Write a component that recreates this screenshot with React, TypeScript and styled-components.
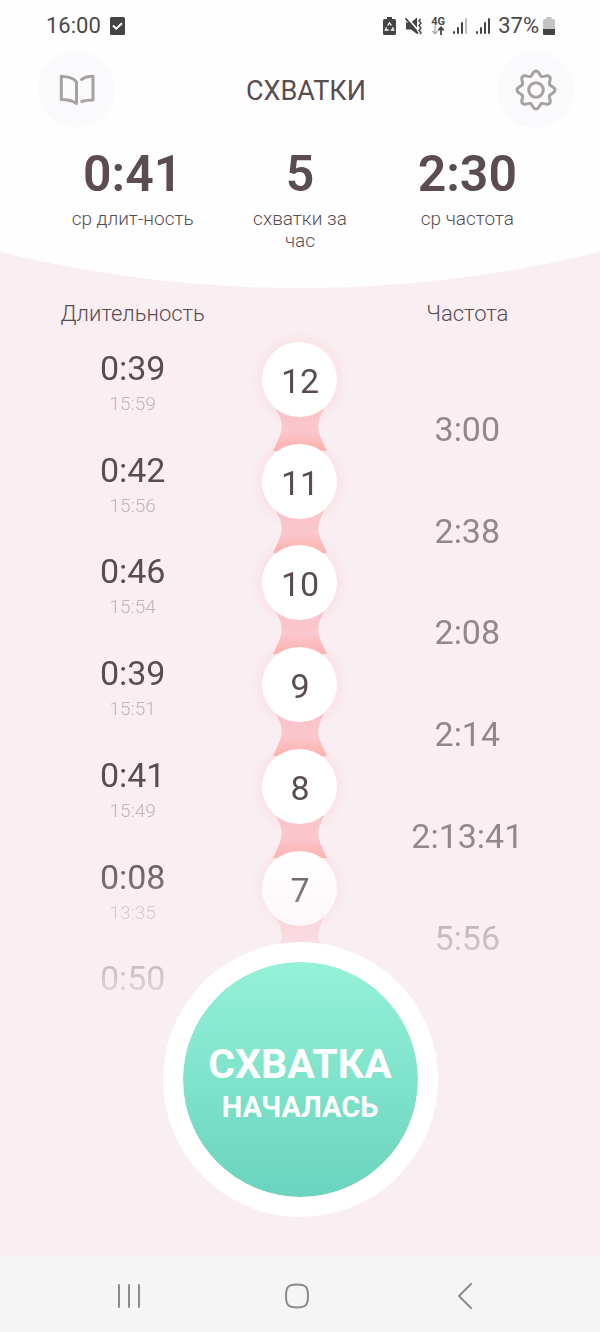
import React from "react";
import styled, { createGlobalStyle } from "styled-components";

const GlobalStyle = createGlobalStyle`
  * { box-sizing: border-box; }
  body {
    margin: 0;
    background: #f9eef2;
    color: #5a4c51;
    font-family: Roboto, "Liberation Sans", sans-serif;
  }
  button { font: inherit; color: inherit; border: 0; padding: 0; background: none; cursor: pointer; }
  h1, h2, p, dl, dd, dt, ol { margin: 0; padding: 0; }
  svg { display: block; }
`;

const Screen = styled.div`
  min-height: 100vh;
  display: flex;
  flex-direction: column;
`;

const Header = styled.header`
  background: #fefefe;
`;

const StatusBar = styled.div`
  height: 51px;
  padding: 0 45px 0 46px;
  display: flex;
  align-items: center;
  justify-content: space-between;
  font-size: 22px;
  line-height: 26px;
  color: #4a4a4a;
`;

const StatusGroup = styled.div<{ $gap: number }>`
  display: flex;
  align-items: center;
  gap: ${(p) => p.$gap}px;
`;

const TopBar = styled.div`
  padding: 0 26px 0 38px;
  display: flex;
  align-items: center;
  justify-content: space-between;
`;

const RoundButton = styled.button`
  width: 77px;
  height: 77px;
  border-radius: 50%;
  background: #fafafd;
  display: grid;
  place-items: center;
`;

const Title = styled.h1`
  padding-top: 2px;
  font-size: 27px;
  line-height: 32px;
  font-weight: 400;
`;

const Columns = styled.div`
  display: grid;
  grid-template-columns: repeat(3, minmax(0, 1fr));
  padding: 0 49px;
  text-align: center;
`;

const Stats = styled(Columns).attrs({ as: "dl" })`
  padding-top: 16px;
`;

const Stat = styled.div`
  display: flex;
  flex-direction: column-reverse;
  justify-content: flex-end;
  align-items: center;
`;

const StatValue = styled.dd`
  font-size: 50px;
  line-height: 60px;
  font-weight: 600;
`;

const StatLabel = styled.dt`
  max-width: 126px;
  margin-top: 4px;
  font-size: 19px;
  line-height: 22px;
  font-weight: 300;
`;

const Curve = styled.svg`
  width: 100%;
  height: 36px;
  background: #f9eef2;
`;

const Main = styled.main`
  flex: 1;
  display: flex;
  flex-direction: column;
  align-items: center;
  padding-bottom: 40px;
`;

const Heads = styled(Columns)`
  width: 100%;
  padding-top: 12px;
`;

const Head = styled.h2`
  font-size: 22px;
  line-height: 28px;
  font-weight: 300;
  white-space: nowrap;
`;

const List = styled.ol`
  width: 100%;
  height: 712px;
  padding-top: 14px;
  box-sizing: content-box;
  list-style: none;
  display: flex;
  flex-direction: column;
  mask-image: linear-gradient(#000 520px, transparent 690px);
`;

const Row = styled(Columns).attrs({ as: "li" })`
  flex: 1 1 0;
  min-height: 0;
`;

const Duration = styled.div`
  padding-top: 7px;
  font-size: 34px;
  line-height: 38px;
`;

const StartedAt = styled.div`
  margin-top: 6px;
  font-size: 19px;
  line-height: 22px;
  font-weight: 300;
  color: #c0b3ba;
`;

const BeadColumn = styled.div`
  display: flex;
  flex-direction: column;
  align-items: center;
`;

const Bead = styled.div`
  position: relative;
  z-index: 1;
  flex: none;
  width: 75px;
  height: 75px;
  border-radius: 50%;
  background: #fff;
  box-shadow: 0 0 10px 4px rgba(255, 190, 185, 0.24);
  font-size: 34px;
  line-height: 79px;
`;

const Link = styled.svg`
  flex: none;
  margin-top: -10px;
`;

const Interval = styled.div`
  padding-top: 68px;
  font-size: 34px;
  line-height: 38px;
  color: #95868d;
`;

const StartButton = styled.button`
  position: relative;
  z-index: 2;
  width: 275px;
  height: 275px;
  margin-top: -112px;
  padding-top: 6px;
  border: 20px solid #fff;
  border-radius: 50%;
  background: linear-gradient(#94f2d8, #6bd3be) padding-box;
  color: #fff;
  font-weight: 700;
  display: flex;
  flex-direction: column;
  align-items: center;
  justify-content: center;
`;

const StartTitle = styled.span`
  font-size: 41px;
  line-height: 48px;
`;

const StartText = styled.span`
  font-size: 29px;
  line-height: 38px;
`;

const SystemNav = styled.nav`
  height: 75px;
  padding: 2px 51px 0 45px;
  background: #f5f5f5;
  display: grid;
  grid-template-columns: repeat(3, 1fr);
`;

const NavButton = styled.button`
  display: grid;
  place-items: center;
`;

const CheckIcon = () => (
  <svg width="15" height="18" viewBox="0 0 15 18">
    <rect width="15" height="18" rx="1.5" fill="#444" />
    <path d="M3 8.500l3.200 3.200L12 6.200" fill="none" stroke="#fff" strokeWidth="2" />
  </svg>
);

const SaverIcon = () => (
  <svg width="13" height="18" viewBox="0 0 13 18">
    <path d="M4 0h5v2h2.500q1.500 0 1.500 1.500v13q0 1.500-1.500 1.500h-10q-1.500 0-1.500-1.500v-13q0-1.500 1.500-1.500h2.500z" fill="#444" />
    <path d="M4.600 8.500L6.500 5.800l1.900 2.700M9.500 10.300l1.200 2.700H7.700M5.700 13H2.300l1.200-2.700" fill="none" stroke="#fff" strokeWidth="1.300" />
  </svg>
);

const MuteIcon = () => (
  <svg width="17" height="18" viewBox="0 0 17 18">
    <path d="M1 5.500h5l6-5v16.500l-6-4.500H1z" fill="#444" />
    <path d="M2 0l12 14.500" stroke="#fefefe" strokeWidth="1.600" />
    <path d="M.5 1.200l12.500 15.300" stroke="#444" strokeWidth="1.800" />
    <path d="M15.500 2l-1.500 2 2 2-2 2.500 2 2.500-2 2.500 2 2-1 1.500" fill="none" stroke="#444" strokeWidth="1.400" />
  </svg>
);

const NetworkMark = styled.span`
  width: 14px;
  display: flex;
  flex-direction: column;
  align-items: center;
  font-size: 11px;
  line-height: 9px;
  font-weight: 700;
`;

const Arrows = () => (
  <svg width="14" height="9" viewBox="0 0 14 9">
    <path d="M4 0v7M1.500 5L4 7.800 6.500 5" fill="none" stroke="#aaa" strokeWidth="1.300" />
    <path d="M10 9V2M7.300 4.300L10 1.400 12.700 4.300" fill="none" stroke="#444" strokeWidth="1.800" />
  </svg>
);

const SignalIcon = ({ level }: { level: number }) => (
  <svg width="16" height="17" viewBox="0 0 16 17">
    {[3, 7, 12, 16].map((h, i) => (
      <rect key={h} x={i * 4 + 1} y={17 - h} width="2" height={h} rx="1" fill={i < level ? "#444" : "#bbb"} />
    ))}
  </svg>
);

const BatteryIcon = () => (
  <svg width="12" height="18" viewBox="0 0 12 18">
    <path d="M3.500 0h5v2h2q1.500 0 1.500 1.500v13q0 1.500-1.500 1.500h-9q-1.500 0-1.500-1.500v-13q0-1.500 1.500-1.500h2z" fill="#c4c4c4" />
    <path d="M0 12h12v4.500q0 1.500-1.500 1.500h-9q-1.500 0-1.500-1.500z" fill="#444" />
  </svg>
);

const BookIcon = () => (
  <svg width="36" height="32" viewBox="0 0 36 32" fill="none" stroke="#a7a1a3" strokeWidth="3" strokeLinecap="round" strokeLinejoin="round">
    <path d="M2.300 2.300Q14 3 17.500 8V29.500Q12 25.500 2.300 25.500z" />
    <path d="M22.500 5.500Q27 2.300 34 2.300V26Q27 26 22.800 27.500" />
  </svg>
);

const gearPath = (() => {
  const points: string[] = [];
  for (let a = 0; a < 360; a += 3) {
    const t = (a * Math.PI) / 180;
    const r = 16.8 + 2.2 * Math.cos(8 * t);
    points.push(`${(21 + r * Math.cos(t)).toFixed(2)} ${(21 + r * Math.sin(t)).toFixed(2)}`);
  }
  return `M${points.join("L")}z`;
})();

const GearIcon = () => (
  <svg width="42" height="42" viewBox="0 0 42 42" fill="none" stroke="#a7a1a3" strokeWidth="3" strokeLinejoin="round">
    <path d={gearPath} />
    <circle cx="21" cy="21" r="7.300" />
  </svg>
);

const Connector = ({ id }: { id: string }) => (
  <Link width="54" height="46" viewBox="0 0 54 46" aria-hidden="true">
    <defs>
      <linearGradient id={id} x1="0" y1="0" x2="0" y2="1">
        <stop offset="0.200" stopColor="#fbc6d0" />
        <stop offset="0.550" stopColor="#fbc6cd" />
        <stop offset="1" stopColor="#fdb0ae" />
      </linearGradient>
    </defs>
    <path d="M3 2C8 12 10 17 8 25C6.500 31 3 37 0 44H54C51 37 47.500 31 46 25C44 17 46 12 51 2z" fill={`url(#${id})`} />
  </Link>
);

const stats = [
  { value: "0:41", label: "ср длит-ность" },
  { value: "5", label: "схватки за час" },
  { value: "2:30", label: "ср частота" },
];

const contractions = [
  { n: 12, duration: "0:39", at: "15:59", interval: "3:00" },
  { n: 11, duration: "0:42", at: "15:56", interval: "2:38" },
  { n: 10, duration: "0:46", at: "15:54", interval: "2:08" },
  { n: 9, duration: "0:39", at: "15:51", interval: "2:14" },
  { n: 8, duration: "0:41", at: "15:49", interval: "2:13:41" },
  { n: 7, duration: "0:08", at: "13:35", interval: "5:56" },
  { duration: "0:50" },
];

export default function App() {
  return (
    <Screen>
      <GlobalStyle />
      <Header>
        <StatusBar>
          <StatusGroup $gap={9}>
            <span>16:00</span>
            <CheckIcon />
          </StatusGroup>
          <StatusGroup $gap={7}>
            <StatusGroup $gap={9}>
              <SaverIcon />
              <MuteIcon />
              <NetworkMark>
                4G
                <Arrows />
              </NetworkMark>
            </StatusGroup>
            <SignalIcon level={3} />
            <SignalIcon level={4} />
            <StatusGroup $gap={4}>
              37%
              <BatteryIcon />
            </StatusGroup>
          </StatusGroup>
        </StatusBar>
        <TopBar>
          <RoundButton aria-label="Справка"><BookIcon /></RoundButton>
          <Title>СХВАТКИ</Title>
          <RoundButton aria-label="Настройки"><GearIcon /></RoundButton>
        </TopBar>
        <Stats>
          {stats.map((s) => (
            <Stat key={s.label}>
              <StatLabel>{s.label}</StatLabel>
              <StatValue>{s.value}</StatValue>
            </Stat>
          ))}
        </Stats>
        <Curve viewBox="0 0 600 37" preserveAspectRatio="none" aria-hidden="true">
          <path d="M0 0A1235 1235 0 0 0 600 0z" fill="#fefefe" />
        </Curve>
      </Header>
      <Main>
        <Heads>
          <Head>Длительность</Head>
          <span />
          <Head>Частота</Head>
        </Heads>
        <List>
          {contractions.map((c, i) => (
            <Row key={i}>
              <Duration>
                {c.duration}
                {c.at && <StartedAt>{c.at}</StartedAt>}
              </Duration>
              <BeadColumn>
                {c.n && (
                  <>
                    <Bead>{c.n}</Bead>
                    <Connector id={`link-${c.n}`} />
                  </>
                )}
              </BeadColumn>
              {c.interval && <Interval>{c.interval}</Interval>}
            </Row>
          ))}
        </List>
        <StartButton>
          <StartTitle>СХВАТКА</StartTitle>
          <StartText>НАЧАЛАСЬ</StartText>
        </StartButton>
      </Main>
      <SystemNav>
        <NavButton aria-label="Недавние">
          <svg width="24" height="24" viewBox="0 0 24 24" stroke="#8b8b8b" strokeWidth="2" strokeLinecap="round">
            <path d="M2 1v22M12 1v22M22 1v22" />
          </svg>
        </NavButton>
        <NavButton aria-label="Домой">
          <svg width="26" height="26" viewBox="0 0 26 26" fill="none" stroke="#8b8b8b" strokeWidth="2">
            <path d="M13 1.500c8.500 0 11 2 11 11.500s-2.500 11.500-11 11.500-11-2-11-11.500 2.500-11.500 11-11.500z" />
          </svg>
        </NavButton>
        <NavButton aria-label="Назад">
          <svg width="14" height="26" viewBox="0 0 14 26" fill="none" stroke="#8b8b8b" strokeWidth="2" strokeLinecap="round" strokeLinejoin="round">
            <path d="M13 1L1 13l12 12" />
          </svg>
        </NavButton>
      </SystemNav>
    </Screen>
  );
}
